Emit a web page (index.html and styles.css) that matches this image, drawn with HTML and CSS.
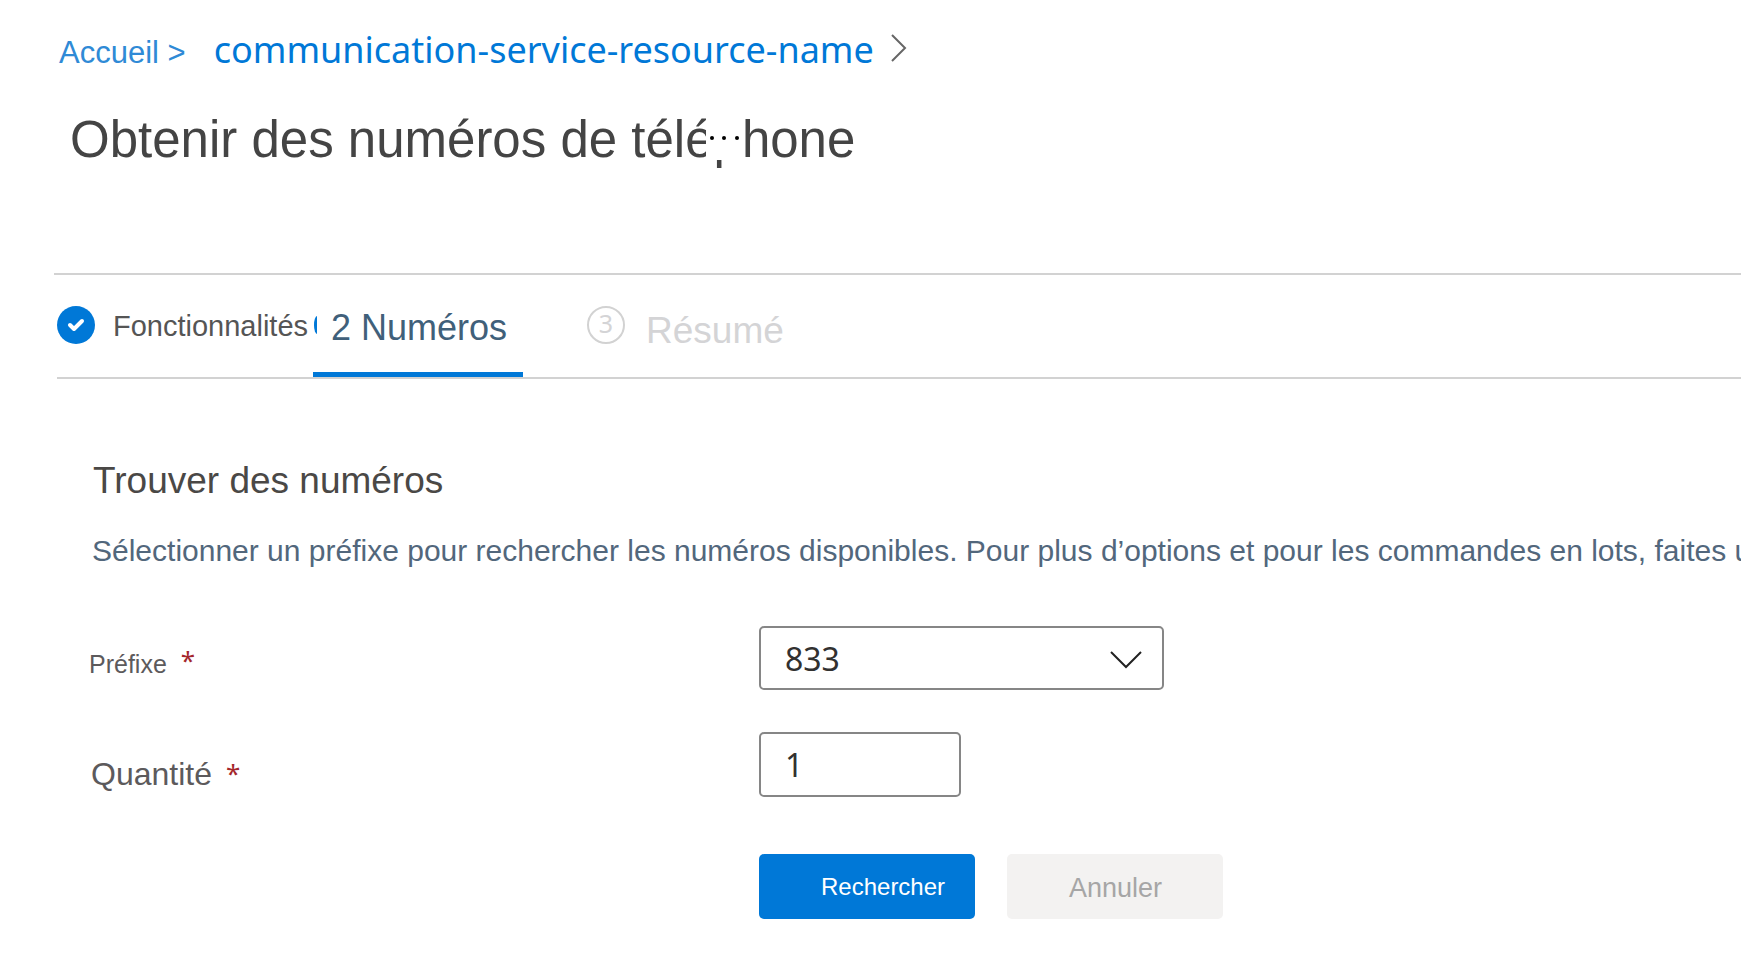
FILE: index.html
```html
<!DOCTYPE html>
<html lang="fr">
<head>
<meta charset="utf-8">
<meta name="viewport" content="width=device-width, initial-scale=1">
<title>Obtenir des numéros de téléphone</title>
<link rel="stylesheet" href="styles.css">
</head>
<body>
<header class="page-header">
  <nav class="breadcrumb" aria-label="Fil d’Ariane">
    <a class="crumb-home" href="#">Accueil &gt;</a>
    <a class="crumb-resource" href="#">communication-service-resource-name</a>
    <svg class="crumb-chevron" viewBox="0 0 16 28" aria-hidden="true"><path d="M1 1l13 13L1 27"/></svg>
  </nav>
  <div class="title-row">
    <h1 class="title">Obtenir des numéros de téléphone</h1>
    <button class="more" type="button" aria-label="Plus">
      <svg viewBox="0 0 38 50" aria-hidden="true"><circle cx="6" cy="28" r="2"/><circle cx="18" cy="28" r="2"/><circle cx="31" cy="28" r="2"/></svg>
    </button>
  </div>
</header>
<nav class="steps" aria-label="Étapes">
  <a class="step step-done" href="#">
    <svg class="step-icon" viewBox="0 0 38 38" aria-hidden="true"><circle cx="19" cy="19" r="19"/><path d="M13 19l4 4 8-8"/></svg>
    <span>Fonctionnalités</span>
  </a>
  <a class="step step-current" href="#" aria-current="step">2 Numéros</a>
  <a class="step step-next" href="#">
    <span class="step-number">3</span>
    <span>Résumé</span>
  </a>
</nav>
<main class="content">
  <h2 class="section-title">Trouver des numéros</h2>
  <p class="intro">Sélectionner un préfixe pour rechercher les numéros disponibles. Pour plus d’options et pour les commandes en lots, faites u</p>
  <form class="form">
    <label class="label label-prefix" for="prefix">Préfixe <span class="required">*</span></label>
    <div class="select-wrap">
      <select class="field" id="prefix"><option>833</option></select>
      <svg class="select-chevron" viewBox="0 0 32 18" aria-hidden="true"><path d="M1 1l15 15L31 1"/></svg>
    </div>
    <label class="label label-quantity" for="quantity">Quantité <span class="required">*</span></label>
    <input class="field field-quantity" id="quantity" type="text" inputmode="numeric" value="1">
    <div class="actions">
      <button class="button button-primary" type="button">Rechercher</button>
      <button class="button button-cancel" type="button" disabled>Annuler</button>
    </div>
  </form>
</main>
</body>
</html>
```

FILE: styles.css
```css
* {
  box-sizing: border-box;
}

body {
  margin: 0;
  overflow-x: hidden;
  background: #fff;
  color: #444;
  font-family: "Liberation Sans", Arial, sans-serif;
}

a {
  text-decoration: none;
}

.page-header {
  margin-left: 54px;
  padding: 26px 0 103px 5px;
  border-bottom: 2px solid #d2d2d2;
}

.breadcrumb {
  display: flex;
  align-items: baseline;
  line-height: 48px;
}

.crumb-home {
  margin-right: 28px;
  color: #2f8ad6;
  font-size: 31px;
}

.crumb-resource {
  color: #0078d7;
  font-family: "Noto Sans", sans-serif;
  font-size: 36px;
}

.crumb-chevron {
  align-self: flex-start;
  width: 16px;
  height: 28px;
  margin: 8px 0 0 17px;
  fill: none;
  stroke: #666;
  stroke-width: 2;
}

.title-row {
  position: relative;
  width: fit-content;
  margin-top: 33px;
  padding-left: 11px;
}

.title {
  margin: 0;
  color: #444;
  font-size: 51px;
  font-weight: 400;
  line-height: 60px;
  white-space: nowrap;
}

.more {
  position: absolute;
  top: 0;
  right: 111px;
  width: 38px;
  height: 50px;
  padding: 0;
  border: 0;
  background: #fff;
}

.more svg {
  display: block;
  fill: #000;
}

.steps {
  display: flex;
  margin-left: 57px;
  height: 104px;
  border-bottom: 2px solid #d2d2d2;
}

.step {
  display: flex;
  align-items: flex-start;
  gap: 18px;
  padding-top: 31px;
}

.step-done {
  width: 256px;
  color: #555;
  font-size: 29px;
  line-height: 40px;
}

.step-icon {
  flex: none;
  width: 38px;
  height: 38px;
  fill: #0078d7;
}

.step-icon path {
  fill: none;
  stroke: #fff;
  stroke-width: 4;
  stroke-linecap: round;
  stroke-linejoin: round;
}

.step-current {
  position: relative;
  width: 210px;
  padding-left: 18px;
  border-bottom: 5px solid #0078d7;
  color: #40607a;
  font-size: 36px;
  line-height: 44px;
}

.step-current::before {
  content: "";
  position: absolute;
  top: 41px;
  left: 1px;
  width: 3px;
  height: 18px;
  border-radius: 3px 0 0 3px / 9px 0 0 9px;
  background: #0078d7;
}

.step-next {
  gap: 21px;
  margin-left: 64px;
  color: #d4d4d6;
  font-size: 37px;
  line-height: 50px;
}

.step-number {
  width: 38px;
  height: 38px;
  border: 2px solid #d2d2d2;
  border-radius: 50%;
  font-family: "Noto Sans", sans-serif;
  font-size: 25px;
  line-height: 30px;
  text-align: center;
}

.content {
  padding: 80px 0 54px 89px;
}

.section-title {
  margin: 0;
  padding-left: 4px;
  color: #4a4846;
  font-size: 37px;
  font-weight: 400;
  line-height: 44px;
}

.intro {
  margin: 28px 0 55px;
  padding-left: 3px;
  overflow: hidden;
  color: #52677c;
  font-size: 30px;
  line-height: 40px;
  white-space: nowrap;
}

.form {
  display: grid;
  grid-template-columns: minmax(200px, 670px) 1fr;
  row-gap: 42px;
}

.label {
  display: flex;
  align-self: end;
  gap: 14px;
  color: #5c5a5c;
}

.label-prefix {
  font-size: 25px;
  line-height: 52px;
}

.label-quantity {
  padding-left: 2px;
  font-size: 32px;
  line-height: 46px;
}

.required {
  color: #a4262c;
  font-family: "Noto Sans", sans-serif;
  font-size: 26px;
  line-height: 44px;
}

.select-wrap {
  position: relative;
  width: 405px;
}

.field {
  appearance: none;
  display: block;
  width: 100%;
  height: 64px;
  padding: 0 24px;
  border: 2px solid #868686;
  border-radius: 5px;
  background: #fff;
  color: #323130;
  font-family: "Noto Sans", sans-serif;
  font-size: 32px;
}

.field-quantity {
  width: 202px;
  height: 65px;
}

.select-chevron {
  position: absolute;
  top: 25px;
  right: 22px;
  width: 32px;
  height: 18px;
  fill: none;
  stroke: #222;
  stroke-width: 2;
  pointer-events: none;
}

.actions {
  display: flex;
  grid-column: 2;
  gap: 32px;
  margin-top: 15px;
}

.button {
  width: 216px;
  height: 65px;
  padding: 0 0 0 62px;
  border: 0;
  border-radius: 5px;
  font-family: inherit;
  text-align: left;
}

.button-primary {
  background: #0078d7;
  color: #fff;
  font-size: 24px;
}

.button-cancel {
  padding-top: 4px;
  background: #f3f2f1;
  color: #a6a6a6;
  font-size: 27px;
}
```
